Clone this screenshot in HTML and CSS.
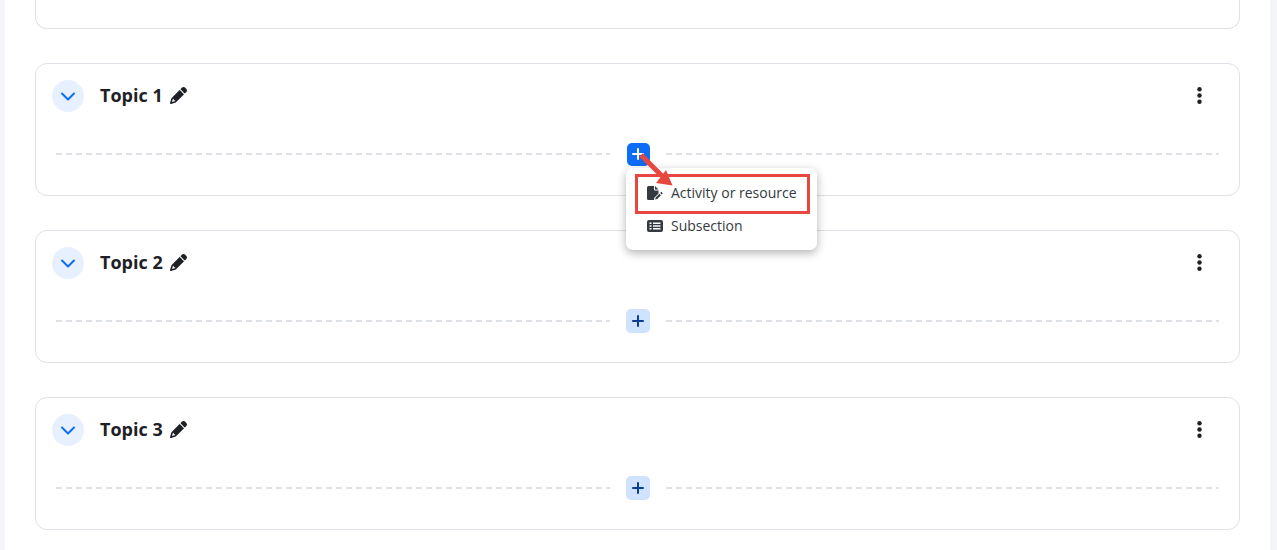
FILE: index.html
```html
<!DOCTYPE html>
<html lang="en">
<head>
<meta charset="utf-8">
<title>Course topics</title>
<link rel="stylesheet" href="styles.css">
</head>
<body>
<svg class="defs" width="0" height="0" aria-hidden="true">
  <symbol id="chev" viewBox="0 0 16 16"><path d="M2 5.500 8 11.500l6-6" fill="none" stroke="currentColor" stroke-width="2" stroke-linecap="round" stroke-linejoin="round"/></symbol>
  <symbol id="pencil" viewBox="0 0 512 512"><path fill="currentColor" d="M410.300 231l11.300-11.300-33.900-33.900-62.100-62.100L291.700 89.800l-11.300 11.300-22.600 22.600L58.600 322.900c-10.400 10.400-18 23.300-22.200 37.400L1 480.700c-2.500 8.400-.2 17.500 6.100 23.700s15.300 8.500 23.700 6.100l120.300-35.400c14.100-4.200 27-11.800 37.400-22.200L387.700 253.700 410.300 231zM160 399.400l-9.100 22.700c-4 3.100-8.500 5.400-13.300 6.900L59.400 452l23-78.100c1.400-4.900 3.800-9.400 6.900-13.300l22.700-9.100v32c0 8.800 7.200 16 16 16h32zM362.700 18.700L348.300 33.200 325.700 55.800 314.300 67.100l33.900 33.900 62.100 62.100 33.900 33.900 11.300-11.300 22.600-22.600 14.500-14.500c25-25 25-65.500 0-90.500L453.300 18.700c-25-25-65.500-25-90.500 0z"/></symbol>
  <symbol id="dots" viewBox="0 0 5 17"><circle cx="2.500" cy="2.300" r="2.200" fill="currentColor"/><circle cx="2.500" cy="8.500" r="2.200" fill="currentColor"/><circle cx="2.500" cy="14.700" r="2.200" fill="currentColor"/></symbol>
  <symbol id="plus" viewBox="0 0 12 12"><path d="M6 1v10M1 6h10" fill="none" stroke="currentColor" stroke-width="2" stroke-linecap="round"/></symbol>
</svg>
<main class="page">
  <div class="card card-cut"></div>

  <section class="card">
    <header class="topic-head">
      <button class="toggle"><svg class="chev"><use href="#chev"/></svg></button>
      <h3 class="topic-title">Topic 1</h3>
      <svg class="pencil"><use href="#pencil"/></svg>
      <svg class="dots"><use href="#dots"/></svg>
    </header>
    <div class="add-row">
      <span class="dash"></span>
      <button class="add add-active"><svg class="plus"><use href="#plus"/></svg></button>
      <span class="dash"></span>
      <div class="menu">
        <div class="menu-item">
          <svg class="menu-icon" viewBox="0 0 16 14"><path fill="currentColor" d="M1.500 0H7v3.500A1 1 0 0 0 8 4.500h3.500v3L7.300 11.700 6.800 14H1.500A1.500 1.500 0 0 1 0 12.500v-11A1.500 1.500 0 0 1 1.500 0zM8 0l3.500 3.500H8z"/><path fill="currentColor" d="M14.300 5.800l1.500 1.500-1.100 1.100-1.500-1.500zM12.400 7.700l1.500 1.500-3.700 3.700-2 .5.500-2z"/></svg>
          <span>Activity or resource</span>
        </div>
        <div class="menu-item">
          <svg class="menu-icon" viewBox="0 0 16 14"><path fill="currentColor" fill-rule="evenodd" d="M2 1h12a2 2 0 0 1 2 2v8a2 2 0 0 1-2 2H2a2 2 0 0 1-2-2V3a2 2 0 0 1 2-2zM2.500 3.500V5h2V3.500zM6 3.500V5h7.500V3.500zM2.500 6.300v1.400h2V6.300zM6 6.300v1.400h7.500V6.300zM2.500 9v1.500h2V9zM6 9v1.500h7.500V9z"/></svg>
          <span>Subsection</span>
        </div>
        <div class="callout"></div>
      </div>
      <svg class="arrow" viewBox="0 0 40 40"><path d="M5 5 26 26" stroke="#e8473f" stroke-width="5" fill="none"/><path fill="#e8473f" d="M36.500 35.500 20 33 30 20z"/></svg>
    </div>
  </section>

  <section class="card">
    <header class="topic-head">
      <button class="toggle"><svg class="chev"><use href="#chev"/></svg></button>
      <h3 class="topic-title">Topic 2</h3>
      <svg class="pencil"><use href="#pencil"/></svg>
      <svg class="dots"><use href="#dots"/></svg>
    </header>
    <div class="add-row">
      <span class="dash"></span>
      <button class="add"><svg class="plus"><use href="#plus"/></svg></button>
      <span class="dash"></span>
    </div>
  </section>

  <section class="card">
    <header class="topic-head">
      <button class="toggle"><svg class="chev"><use href="#chev"/></svg></button>
      <h3 class="topic-title">Topic 3</h3>
      <svg class="pencil"><use href="#pencil"/></svg>
      <svg class="dots"><use href="#dots"/></svg>
    </header>
    <div class="add-row">
      <span class="dash"></span>
      <button class="add"><svg class="plus"><use href="#plus"/></svg></button>
      <span class="dash"></span>
    </div>
  </section>
</main>
</body>
</html>
```
FILE: styles.css
```css
html, body {
  margin: 0;
  height: 550px;
  overflow: hidden;
  background: #f4f5f8;
  font-family: "Open Sans", "Liberation Sans", sans-serif;
  color: #1d2125;
}
.defs { display: block; }
.page {
  margin: 0 7px 0 5px;
  height: 550px;
  box-sizing: border-box;
  padding: 0 30px;
  background: #fff;
  display: flex;
  flex-direction: column;
  gap: 34px;
}
.card {
  height: 133px;
  box-sizing: border-box;
  flex: none;
  border: 1px solid #dee2e6;
  border-radius: 12px;
  padding: 16px 16px 0 16px;
  background: #fff;
}
.card-cut {
  height: 29px;
  padding: 0;
  border-top: 0;
  border-radius: 0 0 12px 12px;
}
.topic-head {
  display: flex;
  align-items: center;
  height: 32px;
}
.toggle {
  width: 32px;
  height: 32px;
  padding: 0;
  border: 0;
  border-radius: 50%;
  background: #e7f0ff;
  color: #0f6cf5;
  display: flex;
  align-items: center;
  justify-content: center;
}
.chev { width: 16px; height: 16px; }
.topic-title {
  margin: 0 0 2px 16px;
  font-size: 18px;
  line-height: 30px;
  font-weight: 700;
}
.pencil { width: 17px; height: 17px; margin-left: 7px; margin-top: -2px; color: #1d2125; }
.dots { width: 5px; height: 17px; margin-left: auto; margin-right: 21.500px; margin-top: -2px; color: #1d2125; }
.add-row {
  position: relative;
  display: flex;
  align-items: center;
  margin: 30px 4px 0 4px;
  height: 24px;
}
.dash {
  flex: 1;
  height: 2px;
  background: repeating-linear-gradient(90deg, #dee2e6 0 6px, transparent 6px 10px);
}
.add {
  width: 24px;
  height: 24px;
  margin: 0 16px;
  padding: 0;
  border: 0;
  border-radius: 5px;
  background: #cfe2ff;
  color: #0b3d91;
  display: flex;
  align-items: center;
  justify-content: center;
}
.add-active {
  width: 23px;
  height: 23px;
  margin-left: 17px;
  background: #0f6cf5;
  color: #fff;
}
.plus { width: 12px; height: 12px; }
.menu {
  position: absolute;
  left: 570px;
  top: 26px;
  width: 191px;
  height: 82px;
  box-sizing: border-box;
  padding: 8px 0;
  background: #fff;
  border-radius: 7px;
  box-shadow: 0 3px 10px rgba(0, 0, 0, .3);
  z-index: 2;
}
.menu-item {
  display: flex;
  align-items: center;
  height: 33px;
  padding-left: 21px;
  font-size: 14px;
  color: #343a40;
}
.menu-icon { width: 16px; height: 14px; margin-right: 8px; color: #343a40; flex: none; }
.callout {
  position: absolute;
  left: 9px;
  top: 6px;
  width: 175px;
  height: 40px;
  box-sizing: border-box;
  border: 3px solid #e8473f;
}
.arrow {
  position: absolute;
  left: 580px;
  top: 8px;
  width: 40px;
  height: 40px;
  z-index: 3;
}
```
